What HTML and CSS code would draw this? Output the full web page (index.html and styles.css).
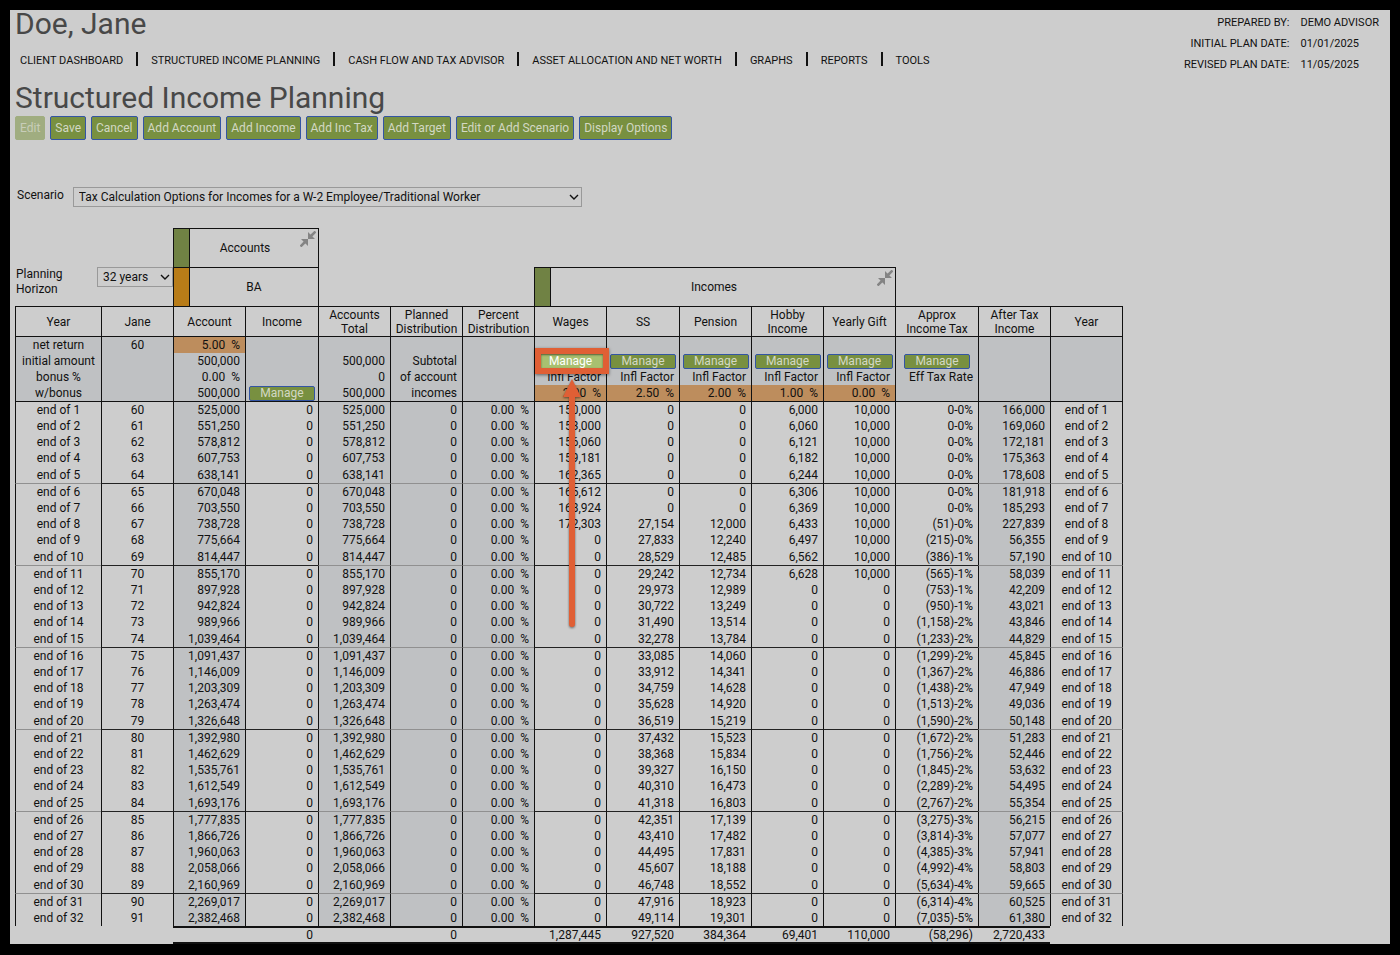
FILE: index.html
```html
<!DOCTYPE html>
<html lang="en">
<head>
<meta charset="utf-8">
<title>Structured Income Planning</title>
<link rel="stylesheet" href="styles.css">
</head>
<body>
<div class="panel">
  <header class="top">
    <div class="top-main">
      <h1 class="heading">Doe, Jane</h1>
      <nav class="nav">
        <a href="#">CLIENT DASHBOARD</a>
        <a href="#">STRUCTURED INCOME PLANNING</a>
        <a href="#">CASH FLOW AND TAX ADVISOR</a>
        <a href="#">ASSET ALLOCATION AND NET WORTH</a>
        <a href="#">GRAPHS</a>
        <a href="#">REPORTS</a>
        <a href="#">TOOLS</a>
      </nav>
    </div>
    <dl class="meta">
      <dt>PREPARED BY:</dt><dd>DEMO ADVISOR</dd>
      <dt>INITIAL PLAN DATE:</dt><dd>01/01/2025</dd>
      <dt>REVISED PLAN DATE:</dt><dd>11/05/2025</dd>
    </dl>
  </header>
  <main>
    <h2 class="heading">Structured Income Planning</h2>
    <div class="toolbar">
      <button class="btn" type="button" disabled>Edit</button>
      <button class="btn" type="button">Save</button>
      <button class="btn" type="button">Cancel</button>
      <button class="btn" type="button">Add Account</button>
      <button class="btn" type="button">Add Income</button>
      <button class="btn" type="button">Add Inc Tax</button>
      <button class="btn" type="button">Add Target</button>
      <button class="btn" type="button">Edit or Add Scenario</button>
      <button class="btn" type="button">Display Options</button>
    </div>
    <div class="scenario">
      <label for="scenario">Scenario</label>
      <span class="select scenario-select">
        <select id="scenario"><option>Tax Calculation Options for Incomes for a W-2 Employee/Traditional Worker</option></select>
        <svg class="chevron" viewBox="0 0 10 6" aria-hidden="true"><path d="M1 1l4 4 4-4"/></svg>
      </span>
    </div>

    <table class="plan">
      <colgroup>
        <col class="c-year"><col class="c"><col class="c"><col class="c-wide"><col class="c"><col class="c"><col class="c"><col class="c"><col class="c-wide"><col class="c"><col class="c"><col class="c"><col class="c-tax"><col class="c"><col class="c-last">
      </colgroup>
      <thead>
        <tr class="group">
          <td colspan="2"></td>
          <th colspan="2" class="boxed"><div class="group-head"><i class="strip green"></i><span>Accounts</span>
            <svg class="collapse" viewBox="0 0 16 16" aria-hidden="true"><path class="line" d="M15.5.5l-5 5M.5 15.5l5-5"/><path d="M8 1v7h7zM8 15V8H1z"/></svg></div></th>
          <td class="edge"></td><td colspan="10"></td>
        </tr>
        <tr class="group">
          <td colspan="2" class="horizon-cell"><div class="horizon"><label for="horizon">Planning Horizon</label>
            <span class="select horizon-select"><select id="horizon"><option>32 years</option></select>
            <svg class="chevron" viewBox="0 0 10 6" aria-hidden="true"><path d="M1 1l4 4 4-4"/></svg></span></div></td>
          <th colspan="2" class="boxed"><div class="group-head"><i class="strip orange"></i><span>BA</span></div></th>
          <td class="edge"></td><td colspan="2"></td>
          <th colspan="5" class="boxed"><div class="group-head"><i class="strip green"></i><span>Incomes</span>
            <svg class="collapse" viewBox="0 0 16 16" aria-hidden="true"><path class="line" d="M15.5.5l-5 5M.5 15.5l5-5"/><path d="M8 1v7h7zM8 15V8H1z"/></svg></div></th>
          <td class="edge"></td><td colspan="2"></td>
        </tr>
        <tr class="names">
          <th>Year</th><th>Jane</th><th>Account</th><th>Income</th><th>Accounts Total</th><th>Planned Distribution</th><th>Percent Distribution</th><th>Wages</th><th>SS</th><th>Pension</th><th>Hobby Income</th><th>Yearly Gift</th><th>Approx Income Tax</th><th>After Tax Income</th><th>Year</th>
        </tr>
      </thead>
      <tbody class="setup">
        <tr>
          <th>net return</th><td class="mid">60</td><td class="rate">5.00<span class="pct">%</span></td><td></td><td></td><td></td><td></td><td></td><td></td><td></td><td></td><td></td><td></td><td></td><td></td>
        </tr>
        <tr>
          <th>initial amount</th><td></td><td>500,000</td><td></td><td>500,000</td><td>Subtotal</td><td></td>
          <td class="mid mark-cell"><button class="btn manage lit" type="button">Manage</button><div class="frame"></div>
            <svg class="arrow" viewBox="0 0 24 256" aria-hidden="true"><path d="M12 4l9 18h-6v227a3 3 0 0 1-6 0V22H3z"/></svg></td>
          <td class="mid"><button class="btn manage" type="button">Manage</button></td>
          <td class="mid"><button class="btn manage" type="button">Manage</button></td>
          <td class="mid"><button class="btn manage" type="button">Manage</button></td>
          <td class="mid"><button class="btn manage" type="button">Manage</button></td>
          <td class="mid"><button class="btn manage" type="button">Manage</button></td>
          <td></td><td></td>
        </tr>
        <tr>
          <th>bonus %</th><td></td><td>0.00<span class="pct">%</span></td><td></td><td>0</td><td>of account</td><td></td><td>Infl Factor</td><td>Infl Factor</td><td>Infl Factor</td><td>Infl Factor</td><td>Infl Factor</td><td>Eff Tax Rate</td><td></td><td></td>
        </tr>
        <tr>
          <th>w/bonus</th><td></td><td>500,000</td><td class="mid"><button class="btn manage" type="button">Manage</button></td><td>500,000</td><td>incomes</td><td></td><td class="rate">2.00<span class="pct">%</span></td><td class="rate">2.50<span class="pct">%</span></td><td class="rate">2.00<span class="pct">%</span></td><td class="rate">1.00<span class="pct">%</span></td><td class="rate">0.00<span class="pct">%</span></td><td></td><td></td><td></td>
        </tr>
      </tbody>
      <tbody class="years" id="years"></tbody>
      <tfoot>
        <tr>
          <td colspan="2" class="blank"></td><td></td><td>0</td><td></td><td>0</td><td></td><td>1,287,445</td><td>927,520</td><td>384,364</td><td>69,401</td><td>110,000</td><td>(58,296)</td><td>2,720,433</td><td class="blank"></td>
        </tr>
      </tfoot>
    </table>
  </main>
</div>
<script src="plan.js"></script>
</body>
</html>
```

FILE: plan.js
```js
// account | wages | SS | pension | hobby | gift | tax | after tax
const plan = `525,000|150,000|0|0|6,000|10,000|0-0%|166,000
551,250|153,000|0|0|6,060|10,000|0-0%|169,060
578,812|156,060|0|0|6,121|10,000|0-0%|172,181
607,753|159,181|0|0|6,182|10,000|0-0%|175,363
638,141|162,365|0|0|6,244|10,000|0-0%|178,608
670,048|165,612|0|0|6,306|10,000|0-0%|181,918
703,550|168,924|0|0|6,369|10,000|0-0%|185,293
738,728|172,303|27,154|12,000|6,433|10,000|(51)-0%|227,839
775,664|0|27,833|12,240|6,497|10,000|(215)-0%|56,355
814,447|0|28,529|12,485|6,562|10,000|(386)-1%|57,190
855,170|0|29,242|12,734|6,628|10,000|(565)-1%|58,039
897,928|0|29,973|12,989|0|0|(753)-1%|42,209
942,824|0|30,722|13,249|0|0|(950)-1%|43,021
989,966|0|31,490|13,514|0|0|(1,158)-2%|43,846
1,039,464|0|32,278|13,784|0|0|(1,233)-2%|44,829
1,091,437|0|33,085|14,060|0|0|(1,299)-2%|45,845
1,146,009|0|33,912|14,341|0|0|(1,367)-2%|46,886
1,203,309|0|34,759|14,628|0|0|(1,438)-2%|47,949
1,263,474|0|35,628|14,920|0|0|(1,513)-2%|49,036
1,326,648|0|36,519|15,219|0|0|(1,590)-2%|50,148
1,392,980|0|37,432|15,523|0|0|(1,672)-2%|51,283
1,462,629|0|38,368|15,834|0|0|(1,756)-2%|52,446
1,535,761|0|39,327|16,150|0|0|(1,845)-2%|53,632
1,612,549|0|40,310|16,473|0|0|(2,289)-2%|54,495
1,693,176|0|41,318|16,803|0|0|(2,767)-2%|55,354
1,777,835|0|42,351|17,139|0|0|(3,275)-3%|56,215
1,866,726|0|43,410|17,482|0|0|(3,814)-3%|57,077
1,960,063|0|44,495|17,831|0|0|(4,385)-3%|57,941
2,058,066|0|45,607|18,188|0|0|(4,992)-4%|58,803
2,160,969|0|46,748|18,552|0|0|(5,634)-4%|59,665
2,269,017|0|47,916|18,923|0|0|(6,314)-4%|60,525
2,382,468|0|49,114|19,301|0|0|(7,035)-5%|61,380`.split("\n").map(line => line.split("|"));

const td = (text, cls = "") => `<td class="${cls}">${text}</td>`;

document.getElementById("years").innerHTML = plan.map((row, i) => {
  const [account, wages, ss, pension, hobby, gift, tax, after] = row;
  const year = `end of ${i + 1}`;
  return "<tr>" +
    `<th class="soft">${year}</th>` +
    td(60 + i, "mid") +
    td(account, "shade") + td("0") +
    td(account, "shade soft") + td("0", "shade soft") +
    td('0.00<span class="pct">%</span>', "shade soft") +
    td(wages) + td(ss) + td(pension) + td(hobby) + td(gift) + td(tax) +
    td(after, "shade soft") + td(year, "mid soft") +
    "</tr>";
}).join("");
```

FILE: styles.css
```css
* { box-sizing: border-box; }

body {
  margin: 0;
  padding: 10px 10px 11px;
  min-height: 100vh;
  display: flex;
  background: #000;
  color: #111;
  font: 12px/16px Roboto, "Liberation Sans", sans-serif;
}

.panel {
  flex: 1;
  min-width: 0;
  padding: 0 5px;
  background: #cdcdcd;
}

.top {
  display: flex;
  justify-content: space-between;
}

.heading {
  margin: 0;
  color: #484848;
  font-size: 30px;
  font-weight: 400;
  line-height: 28px;
}

.nav {
  display: flex;
  align-items: baseline;
  margin: 14px 0 15px 5px;
  font-size: 11px;
  line-height: 16px;
}

.nav a {
  color: #111;
  text-decoration: none;
}

.nav a + a::before {
  content: "";
  display: inline-block;
  width: 2px;
  height: 14px;
  margin: 0 13px;
  background: #111;
  vertical-align: -2px;
}

.meta {
  display: grid;
  grid-template-columns: auto auto;
  column-gap: 11px;
  margin: 2px 6px 0 0;
  align-content: start;
  font-size: 11px;
  line-height: 21px;
}

.meta dt { text-align: right; }
.meta dd { margin: 0; }

.toolbar {
  display: flex;
  gap: 5px;
  margin-top: 4px;
}

.btn {
  height: 24px;
  padding: 0 4px;
  border: 1px solid #3355a4;
  border-radius: 2px;
  background: #789040;
  color: #d3d8c4;
  font: inherit;
}

.btn:disabled {
  border-color: #a0ad80;
  background: #a0ad80;
  color: #c8cdb9;
}

.scenario {
  display: flex;
  gap: 9px;
  margin: 47px 0 0 2px;
}

.select {
  position: relative;
  display: block;
}

.select select {
  appearance: none;
  display: block;
  width: 100%;
  height: 20px;
  padding: 0 5px;
  border: 1px solid #999;
  border-radius: 0;
  background: transparent;
  color: #111;
  font: inherit;
}

.scenario-select { width: 509px; }
.horizon-select { width: 76px; }

.chevron {
  position: absolute;
  right: 3px;
  top: 7px;
  width: 10px;
  height: 6px;
  fill: none;
  stroke: #111;
  stroke-width: 1.4;
  pointer-events: none;
}

.plan {
  width: 1108px;
  margin-top: 21px;
  table-layout: fixed;
  border-collapse: separate;
  border-spacing: 0;
}

.c { width: 72px; }
.c-wide { width: 73px; }
.c-year { width: 86px; }
.c-tax { width: 83px; }
.c-last { width: 73px; }

.plan th,
.plan td {
  padding: 0;
  font-weight: 400;
}

.group > * { height: 39px; }

.boxed {
  border-top: 1px solid #111;
  border-left: 1px solid #111;
}

.edge { border-left: 1px solid #111; }

.group-head {
  display: flex;
  align-items: center;
  height: 38px;
}

.group-head span { flex: 1; }

.strip {
  width: 16px;
  height: 38px;
  border-right: 1px solid #111;
}

.green { background: #708244; }
.orange { background: #b87c18; }

.collapse {
  align-self: flex-start;
  width: 16px;
  height: 16px;
  margin: 2px 2px 0 0;
  fill: #848484;
}

.collapse .line {
  stroke: #848484;
  stroke-width: 2.5;
}

.horizon-cell { vertical-align: top; }

.horizon {
  display: flex;
  justify-content: space-between;
  align-items: flex-start;
  line-height: 15px;
}

.horizon label {
  width: 60px;
  margin-left: 1px;
}

.plan .names th {
  height: 31px;
  padding: 0 4px;
  border: solid #111;
  border-width: 1px 0 1px 1px;
  line-height: 14px;
}

.plan .names th:last-child { border-right-width: 1px; }

.setup > tr > *,
.years > tr > * {
  height: 16px;
  border-left: 1px solid #111;
  line-height: 16px;
  text-align: right;
  white-space: nowrap;
}

.plan .setup td,
.plan .years td { padding-right: 5px; }

.plan tbody .mid { padding-right: 0; }

.plan tbody th,
.plan tbody .mid { text-align: center; }

.setup > tr > *:last-child,
.years > tr > *:last-child { border-right: 1px solid #111; }

.setup > tr > * { background: #bfc1c3; }

.setup > tr:last-child > * {
  height: 17px;
  border-bottom: 1px solid #111;
}

.setup > tr > .rate { background: #bd8d5d; }

.pct { margin-left: 6px; }

.years .shade { background: #bfc1c3; }

.years > tr:nth-child(5n) > * {
  height: 18px;
  border-bottom: 1px solid #222;
}

.years > tr:nth-child(5n) > .soft { border-bottom-color: #909090; }

.plan tfoot td {
  height: 18px;
  padding-right: 5px;
  border: solid #111;
  border-width: 2px 0;
  line-height: 14px;
  text-align: right;
}

.plan tfoot .blank { border: 0; }

.manage {
  display: block;
  width: 66px;
  height: 15px;
  margin: 0 auto;
  line-height: 13px;
}

.lit {
  border-color: #a8c070;
  background: #a8c070;
  color: #fff;
}

.mark-cell { position: relative; }

.frame {
  position: absolute;
  left: 0;
  top: -5px;
  z-index: 1;
  width: 74px;
  height: 26px;
  border: 6px solid #e05f35;
  box-shadow: 0 1px 3px rgba(0, 0, 0, .5), inset 0 1px 2px rgba(0, 0, 0, .5);
}

.arrow {
  position: absolute;
  left: 25px;
  top: 22px;
  z-index: 1;
  width: 24px;
  height: 256px;
  fill: #e05f35;
  filter: drop-shadow(0 1px 1px rgba(0, 0, 0, .5));
}
```
